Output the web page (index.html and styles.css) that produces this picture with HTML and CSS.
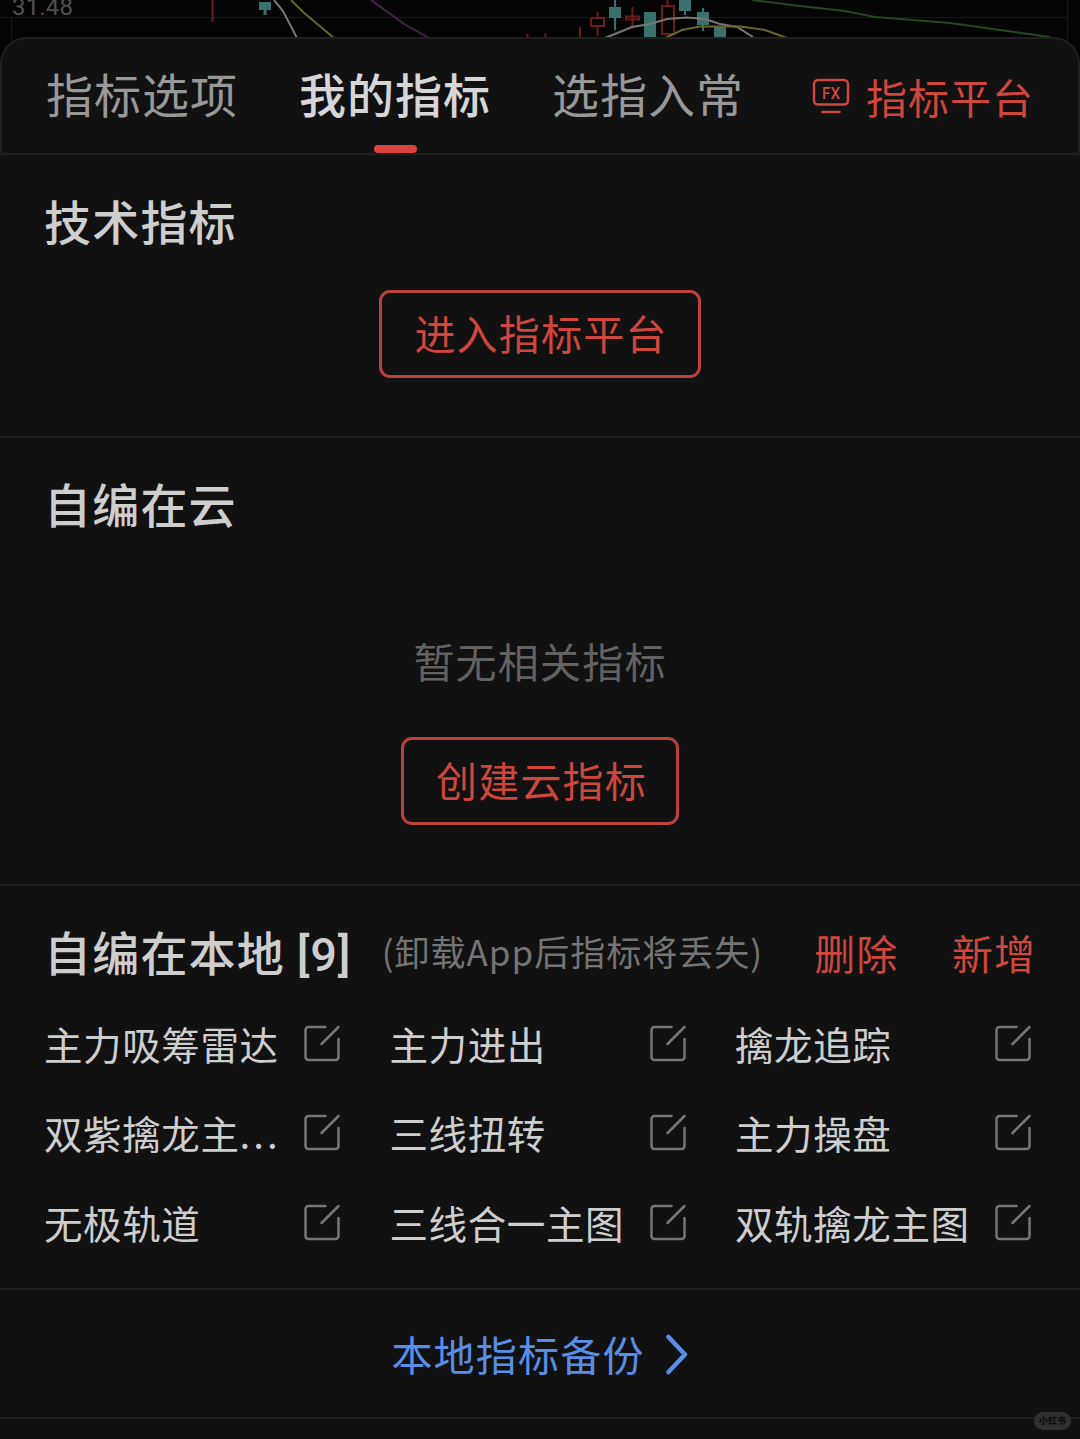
FILE: index.html
```html
<!DOCTYPE html>
<html lang="zh-CN">
<head>
    <meta charset="UTF-8">
    <meta name="viewport" content="width=device-width, initial-scale=1.0">
    <title>我的指标</title>
    <link rel="stylesheet" href="styles.css">
</head>
<body>

<!-- Shared icons -->
<svg class="icon-defs" width="0" height="0">
    <symbol id="edit" viewBox="0 0 38 38">
        <path d="M22.500 3H5.5a3 3 0 0 0-3 3v27a3 3 0 0 0 3 3h27a3 3 0 0 0 3-3V15M18.5 20 35.500 3"/>
    </symbol>
</svg>

<!-- Chart behind the sheet -->
<svg class="chart" viewBox="0 0 1080 64">
    <path class="grid-line" d="M0 17.5H1067M11.5 17V64M1067.5 0V64"/>
    <text class="price" x="12" y="15" textLength="61">31.48</text>
    <path class="up" d="M212.5 0V22M527.500 34V40M545.500 33V40M580 27V40"/>
    <path class="down" d="M259 2h12v8h-4.500v5h-3v-5H259zM609 7h5V0h2v7h5v11h-5v12h-2V18h-5zM644 12h12v27h-12zM679 0h12v11h-5v4h-2v-4h-5zM697 12h5V8h2v4h5v13h-5v6h-2v-6h-5zM714 26h12v12h-12z"/>
    <path class="up" d="M591 18h13v8h-13zM597.500 12v6M597.500 26v10M626 16.500h13v3h-13zM632.500 7v20M662 6h12v28h-12zM667.500 0v6"/>
    <path class="line-white" d="M274 0 283 11 297 38M605 38 632 27 650 24 667 19 687 17.500 705 19 720 24 737 27 753 37"/>
    <path class="line-yellow" d="M291 0 303 12 334 38M665 38 682 30 700 26.500 740 26.500 765 30 787 38"/>
    <path class="line-purple" d="M371 0 404 24 429 38"/>
    <path class="line-green" d="M752 0 800 6 845 11 875 17 950 23 1000 30 1050 37"/>
</svg>

<div class="sheet">
    <div class="tabs">
        <div class="tab">指标选项</div>
        <div class="tab active">我的指标</div>
        <div class="tab">选指入常</div>
        <div class="platform">
            <svg class="fx-icon" viewBox="0 0 38 38">
                <rect x="2" y="3" width="34" height="24.500" rx="4"/>
                <path d="M10.500 35h17"/>
                <text x="10" y="21.500" textLength="18" lengthAdjust="spacingAndGlyphs">FX</text>
            </svg>
            <span>指标平台</span>
        </div>
    </div>

    <div class="section tech">
        <h2>技术指标</h2>
        <button class="btn">进入指标平台</button>
    </div>

    <div class="section cloud">
        <h2>自编在云</h2>
        <p class="empty">暂无相关指标</p>
        <button class="btn">创建云指标</button>
    </div>

    <div class="section local">
        <div class="local-head">
            <h2>自编在本地 <span class="count">[9]</span></h2>
            <span class="hint">(卸载App后指标将丢失)</span>
            <a class="action">删除</a>
            <a class="action">新增</a>
        </div>
        <div class="list">
            <div class="item"><span>主力吸筹雷达</span><svg class="edit"><use href="#edit"/></svg></div>
            <div class="item"><span>主力进出</span><svg class="edit"><use href="#edit"/></svg></div>
            <div class="item"><span>擒龙追踪</span><svg class="edit"><use href="#edit"/></svg></div>
            <div class="item"><span>双紫擒龙主<i class="dots">...</i></span><svg class="edit"><use href="#edit"/></svg></div>
            <div class="item"><span>三线扭转</span><svg class="edit"><use href="#edit"/></svg></div>
            <div class="item"><span>主力操盘</span><svg class="edit"><use href="#edit"/></svg></div>
            <div class="item"><span>无极轨道</span><svg class="edit"><use href="#edit"/></svg></div>
            <div class="item"><span>三线合一主图</span><svg class="edit"><use href="#edit"/></svg></div>
            <div class="item"><span>双轨擒龙主图</span><svg class="edit"><use href="#edit"/></svg></div>
        </div>
    </div>

    <div class="section backup">
        <span>本地指标备份</span>
        <svg class="arrow" viewBox="0 0 24 42"><path d="M3.500 4 20 21.500 3.500 39"/></svg>
    </div>

    <div class="section bottom"></div>
</div>

<div class="watermark">小红书</div>

</body>
</html>
```

FILE: styles.css
```css
* {
    box-sizing: border-box;
}

body {
    margin: 0;
    height: 1439px;
    overflow: hidden;
    background: #040404;
    color: #cecece;
    font-family: "Noto Sans CJK SC", sans-serif;
}

h2, p {
    margin: 0;
}

svg {
    fill: none;
    display: block;
    flex: none;
}

.icon-defs {
    display: none;
}

/* Chart */
.chart {
    width: 1080px;
    height: 64px;
    margin-bottom: -27px; /* sheet slides over the chart */
    stroke-width: 2;
}

.grid-line { stroke: #181818; stroke-width: 1; }
.up { stroke: #6b1c16; }
.down { fill: #39716f; }
.line-white { stroke: #777; }
.line-yellow { stroke: #66662a; }
.line-purple { stroke: #4c1d54; }
.line-green { stroke: #234a1c; }

.price {
    fill: #505050;
    font: 24px Roboto, sans-serif;
}

/* Tabs */
.sheet {
    position: relative;
    height: 1402px;
    background: #111;
    border-radius: 27px 27px 0 0;
}

.tabs {
    display: flex;
    height: 118px;
    padding: 0 43px 0 44px;
    border: 2px solid #202020;
    border-radius: 27px 27px 0 0;
}

.tab {
    position: relative;
    width: 192px;
    margin-right: 61px;
    font-size: 47px;
    letter-spacing: 1px;
    line-height: 108px;
    white-space: nowrap;
    color: #989898;
}

.tab.active {
    color: #d6d6d6;
    font-weight: 500;
}

.tab.active::after {
    content: "";
    position: absolute;
    left: 75px;
    bottom: 0;
    width: 43px;
    height: 8px;
    border-radius: 4px;
    background: #d9453c;
}

.platform {
    display: flex;
    margin-left: 6px;
    font-size: 41px;
    letter-spacing: 1px;
    line-height: 114px;
    white-space: nowrap;
    color: #cf463d;
}

.fx-icon {
    width: 38px;
    height: 38px;
    margin: 38px 16px 0 1px;
    stroke: #cf463d;
    stroke-width: 2.5;
    stroke-linecap: round;
}

.fx-icon text {
    fill: #cf463d;
    stroke: none;
    font: 500 17px Roboto, sans-serif;
    letter-spacing: 0;
}

/* Sections */
.section {
    border-bottom: 2px solid #1f1f1f;
}

h2 {
    font-size: 47px;
    font-weight: 500;
    letter-spacing: 1.2px;
    line-height: 60px;
    white-space: nowrap;
}

.tech,
.cloud {
    display: flex;
    flex-direction: column;
    align-items: center;
    padding: 35px 44px 0;
}

.tech h2,
.cloud h2 {
    align-self: flex-start;
}

.tech {
    height: 283px;
}

.cloud {
    height: 448px;
}

.btn {
    height: 88px;
    padding: 0 30px 4px 32px;
    border: 3px solid #b9433c;
    border-radius: 11px;
    background: none;
    color: #cf463d;
    font: 41px/78px "Noto Sans CJK SC", sans-serif;
    letter-spacing: 1.2px;
    white-space: nowrap;
}

.tech .btn {
    width: 322px;
    margin-top: 40px;
}

.cloud .btn {
    width: 278px;
    margin-top: 52px;
}

.empty {
    margin-top: 102px;
    font-size: 41px;
    letter-spacing: 1.2px;
    line-height: 50px;
    color: #626262;
}

/* Local list */
.local {
    height: 404px;
    padding: 35px 44px 0;
}

.local-head {
    display: flex;
    line-height: 60px;
    white-space: nowrap;
}

.local-head h2 {
    width: 338px;
}

.count {
    font-family: Roboto, sans-serif;
    letter-spacing: .7px;
}

.hint {
    width: 433px;
    font-size: 35px;
    letter-spacing: 1px;
    color: #747474;
}

.action {
    width: 138px;
    font-size: 41px;
    letter-spacing: 1px;
    line-height: 62px;
    color: #cf463d;
}

.action:last-child {
    width: auto;
}

.list {
    display: grid;
    grid-template-columns: repeat(3, 297px);
    column-gap: 48.500px;
    row-gap: 29.300px;
    margin-top: 28px;
}

.item {
    display: flex;
    justify-content: space-between;
    font-size: 38.500px;
    letter-spacing: .6px;
    line-height: 60px;
    white-space: nowrap;
}

.edit {
    width: 38px;
    height: 38px;
    margin-top: 11px;
    stroke: #777;
    stroke-width: 2.5;
    stroke-linecap: round;
}

.dots {
    font-style: normal;
    letter-spacing: 3px;
}

/* Backup link */
.backup {
    display: flex;
    justify-content: center;
    height: 129px;
    font-size: 41px;
    letter-spacing: 1.2px;
    line-height: 126px;
    color: #5a8ee6;
}

.arrow {
    width: 24px;
    height: 42px;
    margin: 43px 0 0 20px;
    stroke: #5a8ee6;
    stroke-width: 4.5;
    stroke-linecap: round;
    stroke-linejoin: round;
}

.bottom {
    border: none;
}

.watermark {
    position: absolute;
    left: 1034px;
    top: 1412px;
    width: 37px;
    height: 18px;
    border-radius: 9px;
    background: #303030;
    color: #0c0c0c;
    font-size: 9px;
    font-weight: 900;
    line-height: 17px;
    text-align: center;
}
```
